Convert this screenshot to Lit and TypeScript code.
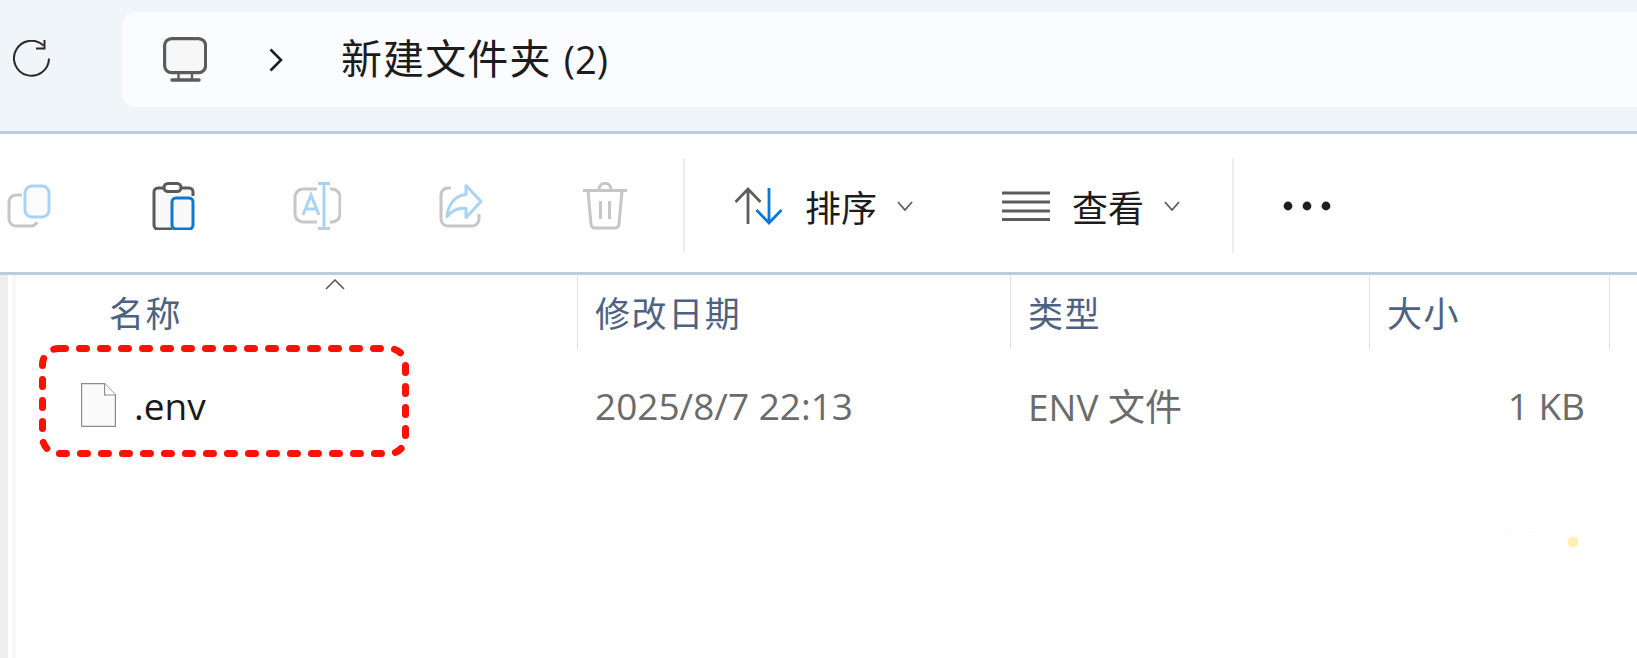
import { LitElement, html, css } from "lit";
import { customElement } from "lit/decorators.js";

const GRAY = "#c6c6c6";
const LBLUE = "#a9d3f3";
const DARK = "#5a5a5a";
const BLUE = "#0a78d4";

@customElement("app-root")
export class AppRoot extends LitElement {
  static styles = css`
    :host {
      display: block;
      position: relative;
      width: 1637px;
      height: 658px;
      overflow: hidden;
      background: #fff;
      font-family: "Noto Sans CJK SC", "Noto Sans", sans-serif;
      color: #1a1a1a;
    }
    svg { display: block; flex: none; }
    .top {
      box-sizing: border-box;
      background: #f0f5f9;
      border-bottom: 3px solid #b9cddb;
      height: 134px;
      display: flex;
      padding-top: 12px;
    }
    .refresh { width: 122px; padding: 28px 0 0 13px; box-sizing: border-box; }
    .address {
      flex: 1;
      height: 95px;
      background: #fbfcff;
      border-radius: 14px 0 0 14px;
      display: flex;
      align-items: center;
      box-sizing: border-box;
      padding-left: 41px;
    }
    .crumb { margin-left: 62px; }
    .title { margin-left: 58px; margin-top: -4px; font-size: 41px; line-height: 50px; letter-spacing: 1.1px; white-space: nowrap; color: #1c1c1c; }
    .title span { font-family: "Open Sans", sans-serif; font-size: 38px; letter-spacing: 0; margin-left: 2px; }
    .toolbar {
      height: 141px;
      box-sizing: border-box;
      border-bottom: 3px solid #b9cddb;
      padding-top: 5px;
      display: flex;
      align-items: center;
      margin-left: -43px;
    }
    .tool { width: 144px; display: flex; justify-content: center; }
    .sep { width: 2px; height: 95px; background: #ececec; border-radius: 1px; margin-left: 6px; }
    .btn { display: flex; align-items: center; font-size: 36px; line-height: 44px; color: #1c1c1c; }
    .btn .lbl { width: 73px; }
    .sort { margin-left: 49px; }
    .sort .lbl { margin-left: 22px; }
    .sort .chev { margin-left: 19px; }
    .view { margin-left: 89px; }
    .view .lbl { margin-left: 22px; }
    .view .chev { margin-left: 19px; }
    .view + .sep { margin-left: 52px; }
    .dots { margin-left: 49px; }
    .list { position: relative; height: 383px; }
    .strip {
      position: absolute; left: 0; top: 0; bottom: 0; width: 16px;
      background: linear-gradient(to right, #efefef 8px, #fff 8px, #fff 12px, #f8f8f8 12px);
    }
    .head, .row {
      display: grid;
      grid-template-columns: 577px 433px 359px 240px 28px;
    }
    .head { height: 75px; color: #4d6282; font-size: 35px; }
    .cell { box-sizing: border-box; display: flex; align-items: center; padding-left: 17px; position: relative; }
    .head .cell + .cell { border-left: 1px solid #dfe3e6; }
    .head .cell { letter-spacing: 1.600px; padding-bottom: 2px; }
    .head .name { padding-left: 109px; }
    .sorted { position: absolute; left: 325px; top: 4px; }
    .row { height: 110px; align-items: center; font-family: "Open Sans", "Noto Sans CJK SC", sans-serif; font-size: 37px; color: #6b6b6b; }
    .row .cell { padding-left: 18px; }
    .row .name { padding-left: 81px; color: #1a1a1a; gap: 18px; }
    .row .size { justify-content: flex-end; padding-right: 24px; }
    .mark { position: absolute; left: 39px; top: 70px; pointer-events: none; }
    .logo { position: absolute; left: 1480px; top: 215px; pointer-events: none; }
  `;

  private chev() {
    return html`<svg class="chev" width="16" height="10" viewBox="0 0 16 10"><path d="M1 1l7 8 7-8" fill="none" stroke="#5f5f5f" stroke-width="1.8"/></svg>`;
  }

  render() {
    return html`
      <div class="top">
        <div class="refresh">
          <svg width="38" height="38" viewBox="0 0 38 38" fill="none" stroke="#2a2a2a" stroke-width="2">
            <path d="M30.5 5.5A17.5 17.5 0 1 0 36 18.5"/>
            <path d="M31.5 0v8.5H23"/>
          </svg>
        </div>
        <div class="address">
          <svg width="44" height="45" viewBox="0 0 44 45" fill="none" stroke="#5c5c5c" stroke-width="3.2">
            <rect x="1.6" y="1.6" width="41" height="34" rx="7" fill="#f7f7f7"/>
            <path d="M15.5 36v7M29 36v7" stroke-width="2.4"/>
            <path d="M9 43h27" stroke-linecap="round" stroke-width="3.4"/>
          </svg>
          <svg class="crumb" width="14" height="24" viewBox="0 0 14 24" fill="none" stroke="#1f1f1f" stroke-width="2.6">
            <path d="M1.5 1.5L12 12 1.5 22.5"/>
          </svg>
          <div class="title">新建文件夹 <span>(2)</span></div>
        </div>
      </div>
      <div class="toolbar">
        <div class="tool">
          <svg width="44" height="44" viewBox="0 0 44 44" fill="none" stroke-width="3">
            <path d="M15 11H9a7 7 0 0 0-7 7v17a7 7 0 0 0 7 7h15a7 7 0 0 0 6-4" stroke="${GRAY}"/>
            <rect x="18" y="2" width="24" height="31" rx="7" stroke="${LBLUE}" fill="#fbfbfb"/>
          </svg>
        </div>
        <div class="tool">
          <svg width="44" height="48" viewBox="0 0 44 48" fill="none" stroke-width="3">
            <path d="M21 46H7a4 4 0 0 1-4-4V9a4 4 0 0 1 4-4h31a4 4 0 0 1 4 4v4" stroke="${DARK}" fill="#f9f9f9" transform="translate(0 1)" />
            <rect x="13" y="1.5" width="17" height="8" rx="4" stroke="${DARK}" fill="#fff"/>
            <rect x="21" y="16" width="21" height="31" rx="4" stroke="${BLUE}" fill="#f9f9f9"/>
          </svg>
        </div>
        <div class="tool">
          <svg width="48" height="48" viewBox="0 0 48 48" fill="none" stroke-width="3">
            <path d="M24 7H10a8 8 0 0 0-8 8v17a8 8 0 0 0 8 8h14M37 7h2a8 8 0 0 1 8 8v17a8 8 0 0 1-8 8h-2" stroke="${GRAY}"/>
            <path d="M31 2.5v43M25 1.5h12M25 46.500h12M10 33l8-20 8 20M12.500 27h11" stroke="${LBLUE}" />
          </svg>
        </div>
        <div class="tool">
          <svg width="44" height="44" viewBox="0 0 44 44" fill="none" stroke-width="3">
            <path d="M12 4H9a7 7 0 0 0-7 7v24a7 7 0 0 0 7 7h24a7 7 0 0 0 7-7v-5" stroke="${GRAY}"/>
            <path d="M27 1.500l15 16-15 16v-9c-8-1-14 2-19 8 1-12 8-21 19-22z" stroke="${LBLUE}" fill="#fff" stroke-linejoin="round"/>
          </svg>
        </div>
        <div class="tool">
          <svg width="46" height="48" viewBox="0 0 46 48" fill="none" stroke="${GRAY}" stroke-width="3">
            <path d="M1 8.500h44M17 8c0-9 12-9 12 0M6 9l3 33a4 4 0 0 0 4 4h20a4 4 0 0 0 4-4l3-33M18.500 19v18M27.500 19v18" />
          </svg>
        </div>
        <div class="sep"></div>
        <div class="btn sort">
          <svg width="49" height="38" viewBox="0 0 49 38" fill="none" stroke-width="2.8">
            <path d="M14 37V2M1.500 15L14 2l12.500 13" stroke="#5e5e5e"/>
            <path d="M35 1v35M22.500 23L35 36l12.500-13" stroke="${BLUE}"/>
          </svg>
          <span class="lbl">排序</span>
          ${this.chev()}
        </div>
        <div class="btn view">
          <svg width="48" height="30" viewBox="0 0 48 30" fill="none" stroke="#5c5c5c" stroke-width="3">
            <path d="M0 2h48M0 11h48M0 20h48M0 28.500h48"/>
          </svg>
          <span class="lbl">查看</span>
          ${this.chev()}
        </div>
        <div class="sep"></div>
        <svg class="dots" width="48" height="10" viewBox="0 0 48 10" fill="#1f1f1f">
          <circle cx="5" cy="5" r="4.400"/><circle cx="24" cy="5" r="4.400"/><circle cx="43" cy="5" r="4.400"/>
        </svg>
      </div>
      <div class="list">
        <div class="strip"></div>
        <div class="head">
          <div class="cell name">名称</div>
          <div class="cell">修改日期</div>
          <div class="cell">类型</div>
          <div class="cell">大小</div>
          <div class="cell"></div>
        </div>
        <svg class="sorted" width="20" height="11" viewBox="0 0 20 11" fill="none" stroke="#555" stroke-width="1.500">
          <path d="M1 10l9-9 9 9"/>
        </svg>
        <div class="row">
          <div class="cell name">
            <svg width="35" height="44" viewBox="0 0 35 44" fill="#fafafa" stroke="#8c8c8c" stroke-width="1.200">
              <path d="M.6.600h23l10.800 11.400v31.400H.600z"/>
              <path d="M23.600.600v11.400h10.800" fill="#fff"/>
            </svg>
            <span>.env</span>
          </div>
          <div class="cell">2025/8/7 22:13</div>
          <div class="cell">ENV 文件</div>
          <div class="cell size">1 KB</div>
          <div class="cell"></div>
        </div>
        <svg class="mark" width="370" height="112" viewBox="0 0 370 112" fill="none">
          <rect x="3.500" y="3.500" width="363" height="105" rx="16" stroke="#fa1205" stroke-width="7" stroke-linecap="round" stroke-dasharray="7 14"/>
        </svg>
        <svg class="logo" width="150" height="168" viewBox="0 0 150 168" fill="none" stroke="#fdfdfd" stroke-width="2">
          <circle cx="75" cy="86" r="66"/>
          <path d="M29 42h42M50 42c0 30-2 50-8 70M81 55v68M109 66v62"/>
          <circle cx="93" cy="52" r="5.500" fill="#fdf0b0" stroke="none"/>
        </svg>
      </div>
    `;
  }
}
